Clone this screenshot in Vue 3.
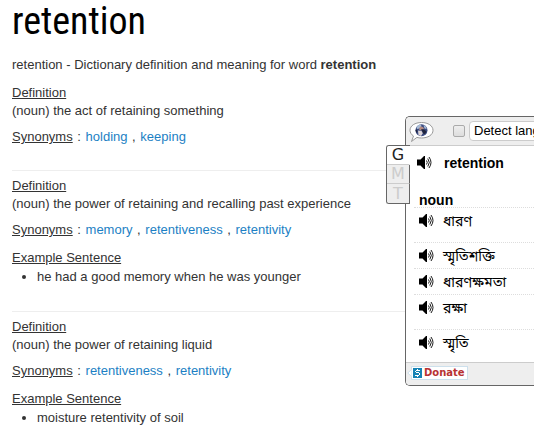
<script setup>
const entries = [
  { text: '(noun) the act of retaining something', synonyms: ['holding', 'keeping'] },
  {
    text: '(noun) the power of retaining and recalling past experience',
    synonyms: ['memory', 'retentiveness', 'retentivity'],
    example: 'he had a good memory when he was younger',
  },
  {
    text: '(noun) the power of retaining liquid',
    synonyms: ['retentiveness', 'retentivity'],
    example: 'moisture retentivity of soil',
  },
]
const translations = [
  { text: 'ধারণ', tall: true },
  { text: 'স্মৃতিশক্তি' },
  { text: 'ধারণক্ষমতা' },
  { text: 'রক্ষা', tall: true },
  { text: 'স্মৃতি' },
]
</script>

<template>
  <main class="page">
    <h1>retention</h1>
    <p class="intro">retention - Dictionary definition and meaning for word <b>retention</b></p>
    <section v-for="(entry, i) in entries" :key="i" class="entry">
      <div><u>Definition</u></div>
      <div>{{ entry.text }}</div>
      <div class="synonyms">
        <u>Synonyms</u> : <template v-for="(s, j) in entry.synonyms" :key="s"><template v-if="j"> , </template><a href="#">{{ s }}</a></template>
      </div>
      <template v-if="entry.example">
        <div class="example"><u>Example Sentence</u></div>
        <ul><li>{{ entry.example }}</li></ul>
      </template>
    </section>
  </main>

  <aside class="popup">
    <div class="panel">
      <header>
        <svg class="logo" width="26" height="22" viewBox="0 0 26 22" aria-hidden="true">
          <path d="M2.500 20.500 4.500 15C2.300 13.600 1 11.500 1 9.300 1 4.700 6 1.500 12.500 1.500S24 4.700 24 9.300 19 17 12.500 17c-1.800 0-3.200-.2-4.600-.6z" fill="#fff" stroke="#999" />
          <circle cx="12.500" cy="9.200" r="6" fill="#3c4c80" />
          <path d="M7.500 6 9.500 4l2.500-.5.5 2-2 2-2.500.5zM14.500 4l2 1 1.200 3-2.200-.5z" fill="#a9bcd6" />
          <path d="M11 5.500l3 .5 1 2-3 1.500-2-1z" fill="#b58a80" />
          <path d="M9 9.500l3.500.5 1.500 2-2 3-2.500-1z" fill="#ddd5d8" />
          <path d="M12 8l3 .5 2.500 2L16 13l-2-.5-1-3zM7 8l1.500 2-.5 2-1.500-2z" fill="#20243d" />
        </svg>
        <input type="checkbox" aria-label="Lock source language">
        <select aria-label="Source language"><option>Detect language</option></select>
      </header>
      <div class="result">
        <div class="word">
          <button class="speak" type="button" aria-label="Listen to retention">
            <svg width="16" height="16" viewBox="0 0 16 16"><path d="M0 4.500h3.500L7 1h1v13H7l-3.500-3.500H0z" fill="#000" /><path d="M9.500 5.500q1.500 2 0 4M10.800 3.500q3 4 0 8M12 2q4 5.500 0 11" fill="none" stroke="#000" stroke-width=".9" /></svg>
          </button>
          <b>retention</b>
        </div>
        <div class="pos">noun</div>
        <div v-for="t in translations" :key="t.text" class="row" :class="{ tall: t.tall }">
          <button class="speak" type="button" :aria-label="'Listen to ' + t.text">
            <svg width="16" height="16" viewBox="0 0 16 16"><path d="M1 4.500h3.500L8 1h1v13H8l-3.500-3.500H1z" fill="#000" /><path d="M10.500 5.500q1.500 2 0 4M11.800 3.500q3 4 0 8M13 2q4 5.500 0 11" fill="none" stroke="#000" stroke-width=".9" /></svg>
          </button>
          <span lang="bn">{{ t.text }}</span>
        </div>
      </div>
      <footer>
        <svg class="pointer" width="5" height="14" viewBox="0 0 5 14" aria-hidden="true"><path d="M5 .5H4.500V3.500L.8 7 4.500 10.500v3H5z" fill="#fff" stroke="#cde0ec" /></svg>
        <a class="donate" href="#">
          <svg width="9" height="10" viewBox="0 0 9 10" shape-rendering="crispEdges" aria-hidden="true"><path d="M0 0h9v10H0z" fill="#1583b5" /><path d="M4 1h1v1h2v1H3v1H2V3h1V2h1zM3 4h3v1H3zM6 5h1v2H6zM2 7h4v1H5v1H4V8H2z" fill="#fff" /></svg>Donate
        </a>
      </footer>
    </div>
    <nav class="tabs">
      <button class="active" type="button">G</button>
      <button type="button">M</button>
      <button type="button">T</button>
    </nav>
  </aside>
</template>

<style>
body {
  background: #fff;
  overflow: hidden;
}
</style>

<style scoped>
.page {
  padding: 0 12px;
  font: 13px/18px "Liberation Sans", Arial, sans-serif;
  color: #333;
}
h1 {
  margin: 0;
  padding-bottom: 14px;
  font: 38px/42px "Roboto Condensed", Roboto, sans-serif;
  color: #000;
}
.intro {
  margin: 0 0 10px;
}
.entry + .entry {
  margin-top: 24px;
  border-top: 1px solid #eee;
  padding-top: 6px;
}
.synonyms {
  margin-top: 8px;
}
.synonyms u {
  margin-right: 1px;
}
.synonyms a {
  margin: 0 1px;
}
a {
  color: #1c7fc4;
  text-decoration: none;
}
.example {
  margin-top: 10px;
}
ul {
  margin: 1px 0 0;
  padding: 0 0 1px 25px;
}
.popup {
  position: absolute;
  top: 116px;
  left: 405px;
  right: 0;
  font: 14px/18px "Liberation Sans", Arial, sans-serif;
  color: #000;
}
.panel {
  border: 1px solid #666;
  border-right: 0;
  border-radius: 5px 0 0 5px;
  background: #fff;
  overflow: hidden;
}
.tabs {
  position: absolute;
  top: 29px;
  left: -19px;
  width: 24px;
  box-sizing: border-box;
  border: 1px solid #666;
  border-right: 0;
  border-radius: 3px 0 0 3px;
  background: #eee;
  overflow: hidden;
}
.tabs button {
  display: block;
  width: 100%;
  height: 19px;
  padding: 0;
  border: 0;
  border-right: 1px solid #666;
  border-bottom: 1px solid #ccc;
  background: #eee;
  color: #ccc;
  font: 16px/18px "DejaVu Sans", "Open Sans", sans-serif;
}
.tabs .active {
  border-right-color: #fff;
  background: #fff;
  color: #222;
}
.tabs button:last-child {
  border-bottom: 0;
}
header {
  display: flex;
  align-items: center;
  height: 28px;
  border-bottom: 1px solid #ccc;
  background: #eee;
}
.logo {
  flex: none;
  margin: 2px 0 0 3px;
}
header input {
  flex: none;
  appearance: none;
  width: 12px;
  height: 12px;
  margin: 0 4px 0 18px;
  border: 1px solid #aaa;
  border-radius: 2px;
  background: linear-gradient(#eee, #ddd);
}
header select {
  flex: none;
  appearance: none;
  width: 130px;
  height: 20px;
  padding: 0 4px;
  border: 1px solid #ccc;
  border-radius: 4px;
  background: #fff;
  color: #000;
  font: 13px/18px "Liberation Sans", Arial, sans-serif;
}
.speak {
  flex: none;
  width: 16px;
  height: 16px;
  padding: 0;
  border: 0;
  background: none;
}
.speak svg {
  display: block;
}
.word {
  display: flex;
  align-items: center;
  gap: 11px;
  height: 34px;
  padding-left: 11px;
}
.pos {
  padding: 13px 0 0 5px;
  margin-left: 8px;
  font-weight: bold;
  line-height: 14px;
}
.row {
  display: flex;
  align-items: center;
  gap: 9px;
  height: 25px;
  margin-left: 8px;
  padding-left: 4px;
  border-top: 1px dotted #ddd;
  font: 14px/20px "Noto Sans Bengali", "Noto Sans", sans-serif;
}
.row span {
  padding-top: 4px;
}
.row.tall {
  padding-bottom: 9px;
}
footer {
  display: flex;
  align-items: center;
  height: 22px;
  margin-top: 7px;
  border-top: 1px solid #ccc;
  background: #eee;
}
.pointer {
  margin: 0 0 3px 1px;
}
.donate {
  display: flex;
  align-items: center;
  gap: 2px;
  margin: 0 0 3px;
  padding: 0 2px 0 1px;
  border: 1px solid #cde0ec;
  border-left: 0;
  background: #fff;
  color: #b83232;
  font: bold 10px/12px "DejaVu Sans", sans-serif;
}
</style>
